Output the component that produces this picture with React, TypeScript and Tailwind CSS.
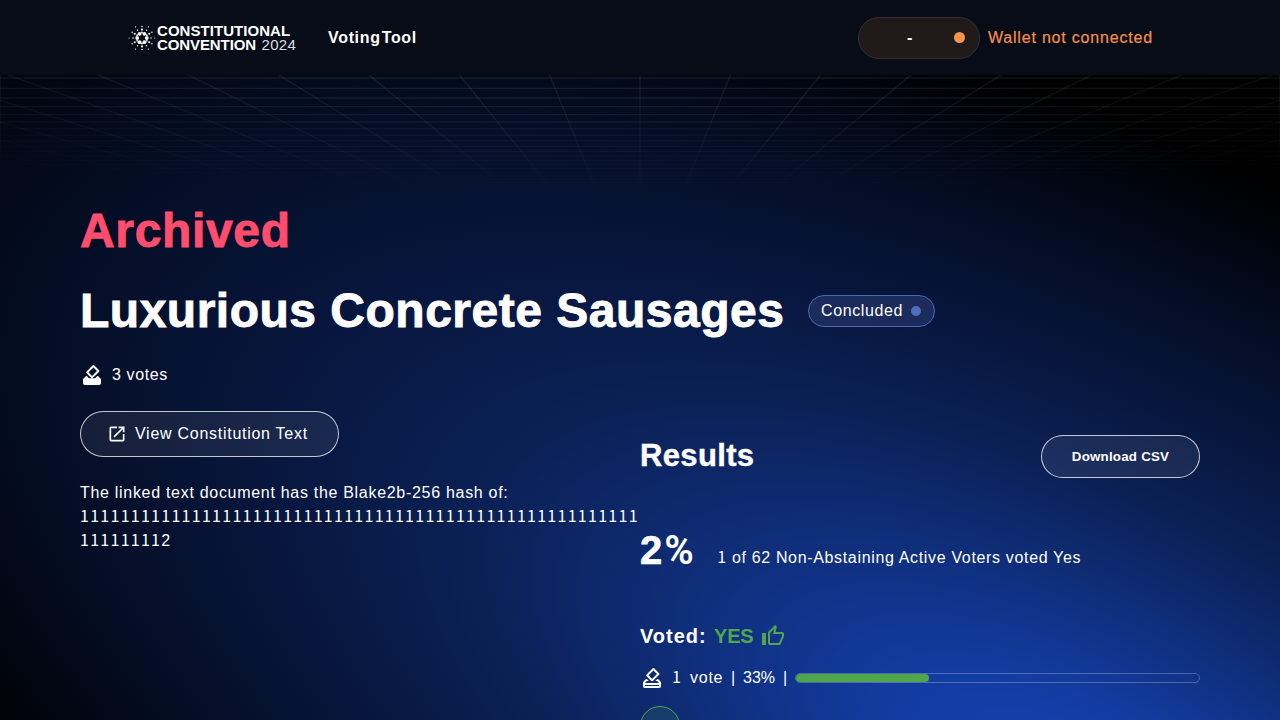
import type { ReactNode } from "react";
import { MdOutlineHowToVote, MdLaunch } from "react-icons/md";

const VANISH_Y = 298;
const TOP_Y = 75;
const columns = Array.from({ length: 27 }, (_, i) => 640 + (i - 13) * 90.3);
const rows = Array.from({ length: 24 }, (_, i) => VANISH_Y - 1000 / (4.545 + 0.2275 * i));

function Backdrop() {
  return (
    <svg className="absolute inset-0 h-full w-full" viewBox="0 0 1280 720" preserveAspectRatio="none" aria-hidden="true">
      <defs>
        <radialGradient id="glow" gradientUnits="userSpaceOnUse" cx="0" cy="0" r="1" gradientTransform="matrix(1060 0 820 870 1085 795)">
          <stop offset="0" stopColor="#1545b8" />
          <stop offset="0.15" stopColor="#133b9f" />
          <stop offset="0.31" stopColor="#0f2d77" />
          <stop offset="0.45" stopColor="#0b2156" />
          <stop offset="0.6" stopColor="#08173f" />
          <stop offset="0.75" stopColor="#050f29" />
          <stop offset="0.88" stopColor="#020713" />
          <stop offset="1" stopColor="#000000" />
        </radialGradient>
        <radialGradient id="fade" gradientUnits="userSpaceOnUse" cx="0" cy="0" r="1" gradientTransform="matrix(1300 0 0 197 640 0)">
          <stop offset="0.5" stopColor="#fff" />
          <stop offset="1" stopColor="#000" />
        </radialGradient>
        <mask id="gridMask" maskUnits="userSpaceOnUse" x="0" y="0" width="1280" height="300">
          <rect width="1280" height="300" fill="url(#fade)" />
        </mask>
      </defs>
      <rect width="1280" height="720" fill="url(#glow)" />
      <g mask="url(#gridMask)" stroke="#fff" strokeOpacity="0.075" strokeWidth="1.3">
        {columns.map((x) => (
          <line key={x} x1={x} y1={TOP_Y} x2={640} y2={VANISH_Y} />
        ))}
        {rows.map((y) => (
          <line key={y} x1={0} y1={y} x2={1280} y2={y} />
        ))}
        <line x1={0.5} y1={75} x2={0.5} y2={160} />
        <line x1={1279.5} y1={75} x2={1279.5} y2={160} />
      </g>
    </svg>
  );
}

const rings = [
  { n: 6, r: 4.8, size: 1.9, turn: 0 },
  { n: 6, r: 5.6, size: 0.9, turn: 30 },
  { n: 6, r: 8.4, size: 1.05, turn: 30 },
  { n: 6, r: 9, size: 0.75, turn: 0 },
  { n: 6, r: 11.4, size: 0.75, turn: 30 },
  { n: 6, r: 12.8, size: 0.6, turn: 0 },
];

function Burst() {
  return (
    <svg className="h-7 w-7" viewBox="-14 -14 28 28" fill="#fff" aria-hidden="true">
      {rings.flatMap((ring, k) =>
        Array.from({ length: ring.n }, (_, i) => {
          const a = ((ring.turn + (360 / ring.n) * i) * Math.PI) / 180;
          return <circle key={`${k}-${i}`} cx={ring.r * Math.cos(a)} cy={ring.r * Math.sin(a)} r={ring.size} />;
        }),
      )}
    </svg>
  );
}

function Ones({ children }: { children: ReactNode }) {
  return <span className="font-['Noto_Sans_CJK_JP',sans-serif] leading-none">{children}</span>;
}

function BallotFilled() {
  return (
    <svg className="h-6 w-6" viewBox="0 0 24 24" fill="currentColor" aria-hidden="true">
      <path d="M18 13h-.68l-2.2 2.2H9.03L6.83 13H6l-3 3v4c0 1.1.89 2 1.99 2H19c1.1 0 2-.89 2-2v-4l-3-3z" />
      <path
        fillRule="evenodd"
        d="M17 7.95l-4.95 4.95-3.54-3.54 4.95-4.95L17 7.95zm-4.24-5.66L6.39 8.66c-.39.39-.39 1.02 0 1.41l4.95 4.95c.39.39 1.02.39 1.41 0l6.36-6.36c.39-.39.39-1.02 0-1.41L14.16 2.3c-.38-.4-1.01-.4-1.4-.01z"
      />
    </svg>
  );
}

function ThumbUp() {
  return (
    <svg className="-ml-px h-6 w-6" viewBox="0 0 24 24" fill="#4fa64b" aria-hidden="true">
      <path d="M9 21h9c.83 0 1.54-.5 1.84-1.22l3.02-7.05c.09-.23.14-.47.14-.73v-2c0-1.1-.9-2-2-2h-6.31l.95-4.57.03-.32c0-.41-.17-.79-.44-1.06L14.17 1 7.58 7.59C7.22 7.95 7 8.45 7 9v10c0 1.1.9 2 2 2zM9 9l4.34-4.34L12 10h9v2l-3 7H9V9zM1 9h4v12H1V9z" />
    </svg>
  );
}

function Header() {
  return (
    <header className="flex h-[75px] items-center justify-between bg-[#080c16] px-32">
      <div className="flex items-center">
        <Burst />
        <div className="ml-px text-[15px] leading-[13.5px] whitespace-nowrap">
          <div className="font-bold tracking-[0.05px]">CONSTITUTIONAL</div>
          <div className="flex">
            <span className="w-[104.5px] font-bold tracking-[-0.1px]">CONVENTION</span>
            <span className="tracking-[0.3px] text-[#dcdee2]">2024</span>
          </div>
        </div>
        <span className="ml-8 font-bold tracking-[0.65px] [word-spacing:-4px]">Voting Tool</span>
      </div>
      <div className="flex items-center gap-2">
        <div className="flex h-[42px] w-[122px] items-center justify-between rounded-full border border-[#35302f] bg-[#211a1b] pr-3.5 pl-12">
          <span className="font-bold">-</span>
          <span className="h-[11px] w-[11px] rounded-full bg-[#f9944d]" />
        </div>
        <span className="w-[164px] whitespace-nowrap tracking-[0.8px] text-[#f2904c] [-webkit-text-stroke:0.2px]">
          Wallet not connected
        </span>
      </div>
    </header>
  );
}

function Proposal() {
  return (
    <section className="flex flex-col gap-6">
      <h1 className="text-[48px] leading-[56px] font-bold tracking-[0.66px] text-[#ff4d6d] [-webkit-text-stroke:0.9px]">
        Archived
      </h1>
      <div className="flex items-center gap-6">
        <h2 className="w-[704px] text-[48px] leading-[56px] font-bold tracking-[0.5px] whitespace-nowrap [-webkit-text-stroke:0.9px]">
          Luxurious Concrete Sausages
        </h2>
        <div className="flex h-8 w-[127px] items-center gap-2 rounded-full border border-[#4a67b5] bg-[#1b2b5b] pl-3">
          <span className="w-[82px] whitespace-nowrap tracking-[0.6px]">Concluded</span>
          <span className="h-2.5 w-2.5 rounded-full bg-[#506dbd]" />
        </div>
      </div>
      <div className="flex h-6 items-center gap-2">
        <BallotFilled />
        <span className="tracking-[0.6px]">3 votes</span>
      </div>
    </section>
  );
}

function Constitution() {
  return (
    <section className="flex flex-col items-start gap-6">
      <button className="flex h-[46px] w-[259px] items-center rounded-full border border-white/75 bg-white/7 pl-[26px]">
        <MdLaunch className="h-5 w-5" />
        <span className="ml-2 tracking-[0.73px]">View Constitution Text</span>
      </button>
      <p className="leading-6 whitespace-nowrap">
        <span className="tracking-[0.7px]">The linked text document has the Blake2b-256 hash of:</span>
        <br />
        <span className="tracking-[1.28px]">
          <Ones>1111111111111111111111111111111111111111111111111111111</Ones>
        </span>
        <br />
        <span className="tracking-[1.28px]">
          <Ones>11111111</Ones>2
        </span>
      </p>
    </section>
  );
}

function Results() {
  return (
    <section className="flex flex-col pt-6">
      <div className="flex h-[43px] items-center justify-between">
        <h3 className="text-[31px] font-bold tracking-[0.35px] [-webkit-text-stroke:0.4px]">Results</h3>
        <button className="h-[43px] w-[159px] rounded-full border border-white/75 bg-white/7 text-[13.33px] font-bold tracking-[0.22px]">
          Download CSV
        </button>
      </div>
      <div className="mt-12 flex h-12 items-start text-[40px] leading-[48px] font-bold">
        <span className="[-webkit-text-stroke:0.6px]">2</span>
        <span className="mt-px ml-0.5 w-[31px] font-['Roboto',sans-serif] font-semibold">%</span>
        <span className="mt-5 ml-[22px] text-base leading-6 font-normal tracking-[0.66px]">
          <Ones>1</Ones> of 62 Non-Abstaining Active Voters voted Yes
        </span>
      </div>
      <div className="mt-[50px] flex h-6 items-center gap-2 text-xl font-bold">
        <span className="w-[66px] tracking-[1px]">Voted:</span>
        <span className="w-10">
          <span className="tracking-[-0.2px] text-[#4fa64b]">YES</span>
        </span>
        <ThumbUp />
      </div>
      <div className="mt-[18px] flex h-6 items-center gap-2 whitespace-nowrap">
        <MdOutlineHowToVote className="h-6 w-6" />
        <span className="w-2.5">
          <Ones>1</Ones>
        </span>
        <span className="w-[33px] tracking-[0.75px]">vote</span>
        <span className="w-1">|</span>
        <span className="w-8">33%</span>
        <span className="w-1">|</span>
        <div className="h-2.5 grow overflow-hidden rounded-[5px] border border-white/25">
          <div className="h-full w-[33%] rounded-[5px] bg-[#4fa64b]" />
        </div>
      </div>
      <div className="mt-4 h-10 w-10 shrink-0 rounded-full border border-[#4fa64b] bg-[#4fa64b]/15" />
    </section>
  );
}

export default function App() {
  return (
    <div className="relative h-[720px] w-full overflow-hidden bg-black font-['Liberation_Sans',Arial,sans-serif] text-base text-white">
      <Backdrop />
      <div className="relative">
        <Header />
        <main className="flex flex-col gap-6 px-20 pt-32">
          <Proposal />
          <div className="grid grid-cols-2">
            <Constitution />
            <Results />
          </div>
        </main>
      </div>
    </div>
  );
}
